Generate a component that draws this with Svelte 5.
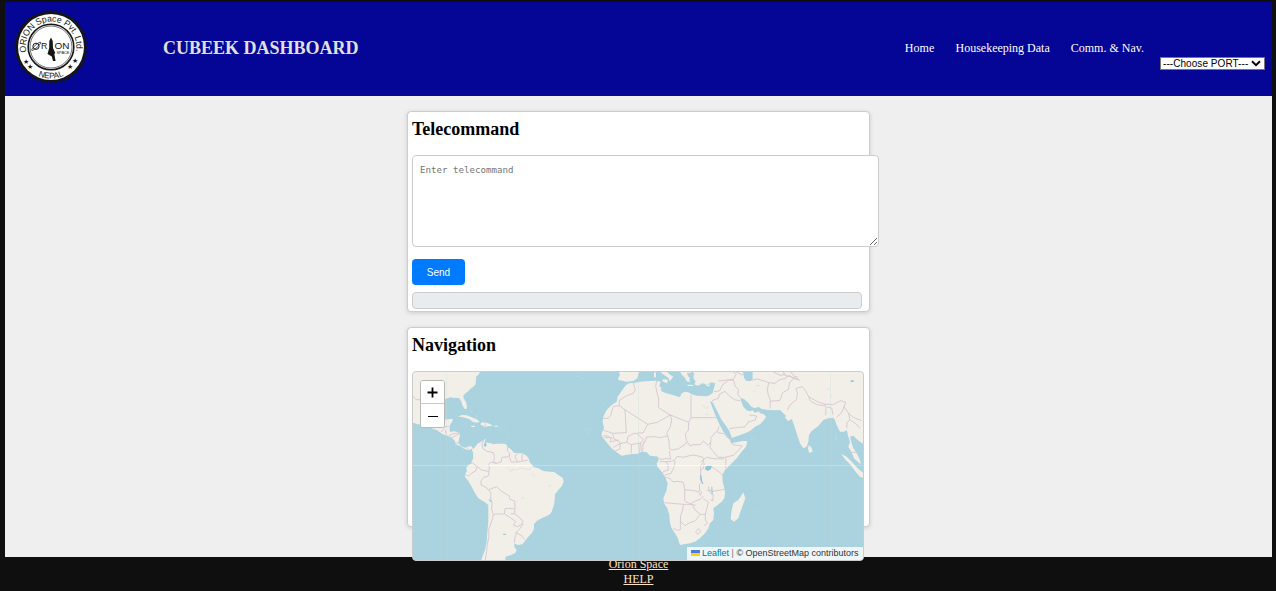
<script>
  const links = ['Home', 'Housekeeping Data', 'Comm. & Nav.'];
  const cogs = Array.from({ length: 48 }, (_, i) => i * 7.5);
</script>

<div class="page">
  <header>
    <svg class="logo" viewBox="0 0 76 76">
      <g fill="#161616">
        <circle cx="38" cy="38" r="35.3" />
        {#each cogs as a}
          <rect x="36.9" y="1.4" width="2.2" height="3" transform="rotate({a} 38 38)" />
        {/each}
      </g>
      <circle cx="38" cy="38" r="33" fill="#fff" />
      <circle cx="38" cy="38" r="22.8" fill="none" stroke="#161616" stroke-width="1.6" />
      <circle cx="38" cy="38" r="21" fill="none" stroke="#161616" stroke-width="0.6" />
      <path id="ring-top" d="M13.4 43.2 A25.2 25.2 0 1 1 62.6 43.2" fill="none" />
      <path id="ring-bottom" d="M15 59.5 A31.5 31.5 0 0 0 61 59.5" fill="none" />
      <g fill="#161616" font-family="Liberation Sans, sans-serif">
        <text font-size="9" textLength="89" lengthAdjust="spacingAndGlyphs"><textPath href="#ring-top">ORION Space Pvt. Ltd.</textPath></text>
        <text font-size="8.2" text-anchor="middle"><textPath href="#ring-bottom" startOffset="50%">NEPAL</textPath></text>
        <text x="28" y="40.3" font-size="8.8">R</text>
        <text x="41.5" y="40.3" font-size="8.8" textLength="15" lengthAdjust="spacingAndGlyphs">ON</text>
        <text x="43.5" y="45.3" font-size="4" textLength="13">SPACE</text>
        <text font-size="6.5" text-anchor="middle"><tspan x="12.7" y="54.5">★</tspan><tspan x="17.2" y="60">★</tspan><tspan x="57.2" y="59.5">★</tspan><tspan x="61.7" y="54">★</tspan></text>
      </g>
      <circle cx="23" cy="37.3" r="3.1" fill="none" stroke="#161616" />
      <ellipse cx="23.2" cy="37.3" rx="6" ry="1.3" transform="rotate(-42 23.2 37.3)" fill="none" stroke="#161616" stroke-width=".7" />
      <path d="M38 28.5 L39.7 32 L40 39 L42.3 44 L41.3 45 L42.6 52 L40 52 L38.8 47.5 L34.5 45 L36.2 39 L36.3 32Z" fill="#161616" />
    </svg>
    <h1>CUBEEK DASHBOARD</h1>
    <nav>
      {#each links as link}<span>{link}</span>{/each}
    </nav>
    <div class="port">
      <span>---Choose PORT---</span>
      <svg width="10" height="7" viewBox="0 0 10 7"><path d="M1 1.3 L5 5.1 L9 1.3" fill="none" stroke="#000" stroke-width="2" /></svg>
    </div>
  </header>

  <main>
    <section class="card">
      <h2>Telecommand</h2>
      <textarea placeholder="Enter telecommand"></textarea>
      <button class="send">Send</button>
      <div class="output"></div>
    </section>

    <section class="card nav-card">
      <h2>Navigation</h2>
      <div class="map">
        <svg class="world" viewBox="413 372 450 188">
          <g transform="translate(405 365) scale(.33333)">
            <path class="land" d="M20 15H227L222 28 213 35 212 58 205 65 198 70 188 80 180 86 175 92 176 100 183 112 186 125 184 133 179 132 173 122 168 108 163 100 155 98 145 98 135 97 128 100 118 103 108 115 105 135 108 155 118 165 126 163 143 161 142 170 136 178 133 190 135 201 147 199 158 201 165 207 163 220 160 232 167 243 178 248 186 246 195 243 203 246 205 252 212 244 217 236 228 231 237 224 242 222 240 230 236 240 240 246 244 240 243 233 255 234 265 238 275 236 295 236 303 238 308 246 318 253 327 263 340 265 352 265 365 272 372 282 374 292 382 300 385 306 400 310 415 318 435 320 447 321 463 332 473 338 476 350 471 362 460 375 450 388 449 405 447 420 440 440 435 448 425 453 410 460 395 468 387 478 387 492 380 505 370 515 360 528 352 538 340 540 328 536 328 545 335 555 330 565 318 570 302 575 300 590H228L232 575 240 555 245 530 247 500 250 470 250 440 250 420 240 412 220 400 210 385 200 365 190 348 180 335 182 325 186 318 184 308 190 300 198 295 205 280 204 262 200 252 188 255 175 250 165 243 152 237 150 228 140 218 128 212 112 207 95 195 75 188 60 183 40 178 20 172Z" />
            <path class="land" d="M158 156L170 150 185 151 200 157 215 163 224 170 216 173 203 170 194 163 180 158 167 155ZM225 178L232 172 245 173 256 178 264 182 248 184 240 187 234 182ZM198 183L209 182 210 186 200 186ZM268 182H279V185H268Z" />
            <path class="isles" d="M195 137l8 4m4 9l12 6m8 4l9 5M301 190l3 7m1 8l3 6m-1 7l2 5m-5 6l-3 5" />
            <path class="border" d="M24 93L33 104 47 104M108 202L115 193 119 185 132 184M120 195L124 208M132 212L145 206 163 204M139 218L150 213 163 207M152 233L163 235M186 247L188 253M203 246L201 252M240 172L241 186M237 225L231 238 234 250 244 258 265 263 268 275 266 292 274 295M308 246L307 257 315 267 313 278 319 291 338 291 353 288 368 286M335 266L330 277 338 291M353 266L350 278 353 288M274 295L288 291 291 277 305 276 314 271M274 295L258 291 250 298 253 305 251 328 250 333 236 337 228 348 228 360 243 367 250 374 258 372 275 365 287 377 300 385 312 392 315 403 329 408 330 430 328 447 317 446 M300 431L322 430 329 433M300 431L298 447 316 458 332 470 325 481 338 485 350 478 354 470 345 459 330 447M250 374L258 384 257 399 261 414 260 432 265 449 272 447 298 447M265 449L262 463 256 480 251 493 252 514 247 538 245 560 240 588M190 297L203 294 216 304 229 315 250 319M216 304L212 318 200 324 191 333 184 330M355 477L344 491 336 500 330 517 328 535M332 503L350 512 360 524" />
            <path class="lake" d="M237 238h7v6h-6zM251 401l8 7-1 4-6-6zM295 506h7v4h-7z" />
            <path class="river" d="M307 307l8 10 10-5 9 4 10-6 15 1 11 4 8-6M316 323l8-8M380 326l8 6M430 364l8-2M350 400l7-2M362 448l5-5" />
          </g>
          <g transform="translate(550 365) scale(.33333)">
            <path class="land" d="M228 60L238 55 255 53 270 50 300 48 318 47 332 50 328 62 334 70 333 78 345 83 360 88 375 92 390 97 395 85 405 80 415 82 425 88 440 92 470 94 480 90 488 84 492 70 496 55 485 52 470 60 460 55 443 62 433 58 437 50 430 38 433 28 426 15H945V236H940L930 230 920 222 910 212 900 215 905 235 910 250 920 265 930 285 932 298 925 292 912 280 905 262 895 245 900 230 895 215 890 195 882 200 870 200 860 180 855 165 850 158 835 160 820 165 805 183 785 198 777 210 775 230 770 245 760 250 750 235 740 205 732 180 725 162 715 168 705 158 708 152 700 145 690 135 678 136 655 135 635 132 625 125 628 132 625 138 630 145 642 148 648 155 642 165 630 178 615 185 600 198 585 205 565 212 542 220 542 235 560 232 578 228 592 228 588 245 575 260 560 280 540 300 525 315 517 330 518 350 523 370 525 385 523 400 515 410 500 422 490 430 492 445 490 465 480 475 475 490 465 505 450 520 435 530 420 535 405 537 390 540 385 525 383 518 375 505 365 490 360 475 358 450 352 430 342 415 340 400 350 375 353 355 345 335 335 320 322 305 320 295 325 288 325 275 315 274 300 272 290 262 275 260 262 266 240 268 215 272 200 262 185 250 172 235 162 222 155 212 155 205 162 190 158 170 160 155 170 135 185 120 200 110 203 95 215 78 222 68Z" />
            <path class="land" d="M205 15H270L265 28 262 40 250 48 228 50 218 47 205 45 205 38 210 30ZM322 15H345L352 22 362 30 370 35 364 43 359 48 355 38 342 30 332 22ZM387 15H426L424 23 411 24 414 34 420 38 418 45 420 52 410 49 405 38 396 30ZM335 44L347 43 354 46 351 54 340 50ZM312 22L318 23V37L312 37ZM412 59L430 60 430 63 413 63ZM468 61L480 58 477 65Z" />
            <path class="land" d="M873 266L890 275 905 290 925 312 945 328V341L930 335 915 318 900 298 885 283ZM776 240L785 248 788 260 778 264 774 252ZM580 382L586 400 575 430 565 460 552 470 542 462 544 440 550 415 565 405 575 390Z" />
            <path class="sea" d="M480 108L488 112 495 125 505 145 515 165 528 182 538 198 545 217 545 232 541 225 532 215 520 200 512 185 502 165 495 148 488 130ZM571 98L582 102 596 115 604 125 615 130 625 125 629 132 624 140 614 143 608 136 600 139 590 136 580 125 574 110ZM578 15H606L608 25 608 42 600 48 588 47 582 38Z" />
            <path class="isles" d="M80 33l6 2m8 3l9 3M148 108l6 2m5 5l6 1m5-14l6-2M100 191l5 5m5-4l6 2m-4 8l6 2M605 222l8-1M616 440l5-2m9-5l3 3M858 207l-1 20M866 275l8 7m8 8l7 8" />
            <path class="border" d="M250 54L256 75 250 85 230 92 208 106 208 122 190 124 187 132 183 150 175 160 160 160M208 122L225 134 293 178 280 203 250 206M225 134L229 203 188 205 180 202 160 196M293 178L322 172 361 150 326 128 326 102 320 78 317 63 320 48M361 150L416 172 423 158 423 90M423 158H500M416 172L415 196 406 206 409 226 419 242 431 239 451 239 460 228 473 240 482 233 M361 150L365 165 361 185 350 205 353 212 357 228 358 251 366 255 386 251 402 240 411 232M353 212L340 216 326 218 316 215 289 216 287 226 279 238 278 260M250 206L234 215 230 232 244 239 270 234 281 225 263 207M160 212L177 214M163 218L183 217 188 222M188 205L192 222 207 228 211 236 209 253 195 258M183 217L181 231 205 225M190 247L210 236 230 232M244 239L244 265M266 235L268 263M272 234L274 260M279 238L284 228M325 282L338 283 348 280 362 283 358 258M329 290H360L373 286 382 274 399 277 427 270 440 272 459 277 461 291 452 304 452 319 451 345 458 355M375 288L373 305 363 325 344 331M345 289L353 296 355 315 341 319 338 325M344 337L360 340 369 351 384 349 400 352 404 374 433 377 445 380 451 391 455 382 449 378 448 358 457 350M404 374V407L420 417 437 408 452 402 460 393M341 413L400 418 425 418 437 421M400 418L398 435 392 452 391 475 391 494 382 496 370 490M392 470L405 482 419 473 435 468 451 448 466 448 471 428 476 411 460 402M426 418L436 436 451 448M466 448L466 466 473 474 461 483M437 500l8-9 8 8-10 9zM452 291L470 277 491 281 522 282M463 295L460 310 454 315M480 302L505 319 519 331M470 375L490 379 523 373M475 365L480 382 490 390 488 408 481 404M482 233L483 218 496 202 503 199 507 184M482 233L480 248 490 260 505 277 526 277M503 203L522 206 537 222M540 223L549 239 577 243 551 271 528 276 527 309M538 191L557 188 585 186 596 170M596 170L616 165 620 153 598 150M486 107L505 100 508 88 525 79 539 94 556 105 571 107M492 80L508 78 520 57 536 45 551 46 555 63 566 75 563 88 571 98M505 48L550 43 558 29 550 20M553 18L579 30M598 47L623 42 642 48 656 53 652 75 655 89 661 106 660 131M656 53L675 55 689 44 705 41 717 31 730 40 750 46M660 109L690 106 698 83 715 74 719 52 733 40M712 136L720 120 740 103 742 83 738 70 757 65 766 76 776 95 802 110 823 117 848 119 872 107 887 112 882 125 875 143 860 156M776 95L780 107 800 119 823 122M823 117L828 127 827 151M831 126L845 129 849 149M882 125L896 145 910 157 935 167M896 145L899 164 891 174 890 190M899 164L919 177 930 190M698 18L706 32 722 35 745 42M720 18L733 34 744 36M670 21L691 31 707 28M900 262L919 262" />
            <path class="lake" d="M466 305l10-4 9 2-2 10-10 5-8-5zM450 330l4 0 3 20 4 7-4 0-6-15zM484 365l3 1 1 22-3 1zM902 46h9v5h-9z" />
            <path class="isles" d="M619 62h9M612 80l4-3M449 57h7" />
            <path class="river" d="M457 121l12 10 7-8M465 150l9-4M832 72l7 1M842 95h5M575 27v5" />
          </g>
          <path d="M413 465.5H863" stroke="#fff" stroke-opacity=".25" />
          <path d="M487 465.5H531M658 465.5H728" stroke="#fff" stroke-opacity=".65" />
          <path d="M446.5 372V560M638.5 372V560M830.5 372V560" stroke="#c9dede" stroke-opacity=".3" />
        </svg>
        <div class="zoom">
          <button aria-label="Zoom in"><svg viewBox="0 0 23 22"><path d="M6.5 11.5h10M11.5 6.5v10" /></svg></button>
          <button aria-label="Zoom out"><svg viewBox="0 0 23 22"><path class="thin" d="M7 11.5h10" /></svg></button>
        </div>
        <div class="credit"><i class="flag"></i><b>Leaflet</b> <em>|</em> © OpenStreetMap contributors</div>
      </div>
    </section>
  </main>

  <footer>
    <span>Orion Space</span>
    <span>HELP</span>
  </footer>
</div>

<style>
  :global(body) { background: #0f0f0f; overflow: hidden; }
  .page {
    box-sizing: border-box;
    width: 1276px;
    height: 591px;
    padding: 2px 4px 0 5px;
    display: flex;
    flex-direction: column;
    background: #0f0f0f;
    font-family: "Liberation Serif", "Times New Roman", serif;
    font-size: 12px;
  }
  header {
    height: 94px;
    flex: none;
    display: flex;
    align-items: center;
    background: #050596;
    box-sizing: border-box;
    padding: 0 7px 2px 8px;
  }
  .logo { width: 76px; height: 76px; flex: none; margin-bottom: 2px; }
  h1 { margin: 0 0 0 74px; font-size: 18px; line-height: 20px; color: #e0e0e0; }
  nav { display: flex; gap: 21px; margin-left: auto; color: #fff; line-height: 14px; }
  nav span:first-child { letter-spacing: .1px; }
  .port {
    box-sizing: border-box;
    width: 105px;
    height: 13px;
    margin: 30px 0 0 16px;
    padding: 0 3px 0 2px;
    display: flex;
    align-items: center;
    justify-content: space-between;
    background: #fff;
    border: 1px solid #767676;
    font: 10px/11px "Liberation Sans", Arial, sans-serif;
    letter-spacing: .06px;
    color: #000;
    white-space: nowrap;
  }
  main {
    flex: none;
    height: 461px;
    box-sizing: border-box;
    padding: 15px 0 0 402px;
    background: #efefef;
    position: relative;
    z-index: 1;
  }
  .card {
    box-sizing: border-box;
    width: 463px;
    height: 201px;
    margin-bottom: 15px;
    padding: 7px 4px 0;
    display: flex;
    flex-direction: column;
    align-items: flex-start;
    background: #fff;
    border: 1px solid #ccc;
    border-radius: 4px;
    box-shadow: 0 1px 4px rgba(0, 0, 0, .15);
  }
  .nav-card { height: 200px; }
  h2 { margin: 0 0 16px; font-size: 18px; line-height: 20px; color: #000; }
  textarea {
    box-sizing: border-box;
    flex: none;
    width: 467px;
    height: 92px;
    margin: 0;
    padding: 8px 7px;
    border: 1px solid #ccc;
    border-radius: 4px;
    background: #fff;
    font: 9.14px/12px "DejaVu Sans Mono", monospace;
    resize: both;
  }
  textarea::placeholder { color: #757575; }
  .send {
    flex: none;
    width: 53px;
    height: 26px;
    margin-top: 12px;
    padding: 0;
    border: 0;
    border-radius: 4px;
    background: #007bff;
    color: #fff;
    font: 10px "Liberation Sans", Arial, sans-serif;
  }
  .output {
    box-sizing: border-box;
    flex: none;
    width: 450px;
    height: 17px;
    margin-top: 7px;
    border: 1px solid #ccc;
    border-radius: 4px;
    background: #e9ecef;
  }
  .map {
    box-sizing: border-box;
    flex: none;
    width: 452px;
    height: 190px;
    border: 1px solid #ccc;
    border-radius: 4px;
    overflow: hidden;
    position: relative;
    background: #aad3df;
  }
  .world { display: block; width: 450px; height: 188px; }
  .land { fill: #f2efe9; }
  .sea { fill: #aad3df; }
  .lake { fill: #8ec7dc; }
  .border { fill: none; stroke: #d5c4d0; stroke-width: 2.6; stroke-linejoin: round; }
  .isles { fill: none; stroke: #c0dadf; stroke-width: 2.2; }
  .river { fill: none; stroke: #cfe0e2; stroke-width: 2; }
  .zoom {
    position: absolute;
    left: 7px;
    top: 8px;
    border: 1px solid #b9b9b4;
    border-radius: 3px;
    overflow: hidden;
    display: flex;
    flex-direction: column;
    background: #fff;
  }
  .zoom button { box-sizing: border-box; width: 23px; height: 22px; padding: 0; border: 0; background: #fff; }
  .zoom button + button { height: 24px; border-top: 1px solid #ccc; }
  .zoom svg { display: block; width: 23px; height: 22px; }
  .zoom path { stroke: #000; stroke-width: 1.8; fill: none; }
  .zoom .thin { stroke-width: 1; }
  .credit {
    position: absolute;
    right: 0;
    bottom: 0;
    box-sizing: border-box;
    width: 176px;
    height: 13px;
    padding: 0 4px;
    background: rgba(255, 255, 255, .8);
    font: 9px/12px "Liberation Sans", Arial, sans-serif;
    color: #333;
    white-space: nowrap;
  }
  .credit b { font-weight: 400; color: #0078a8; }
  .credit em { font-style: normal; color: #777; }
  .flag {
    display: inline-block;
    width: 9px;
    height: 6px;
    margin-right: 2px;
    background: linear-gradient(#4c7be1 50%, #ffd500 50%);
  }
  footer {
    display: flex;
    flex-direction: column;
    align-items: center;
    color: #ffe4c4;
    line-height: 15px;
    text-decoration: underline;
  }
</style>
